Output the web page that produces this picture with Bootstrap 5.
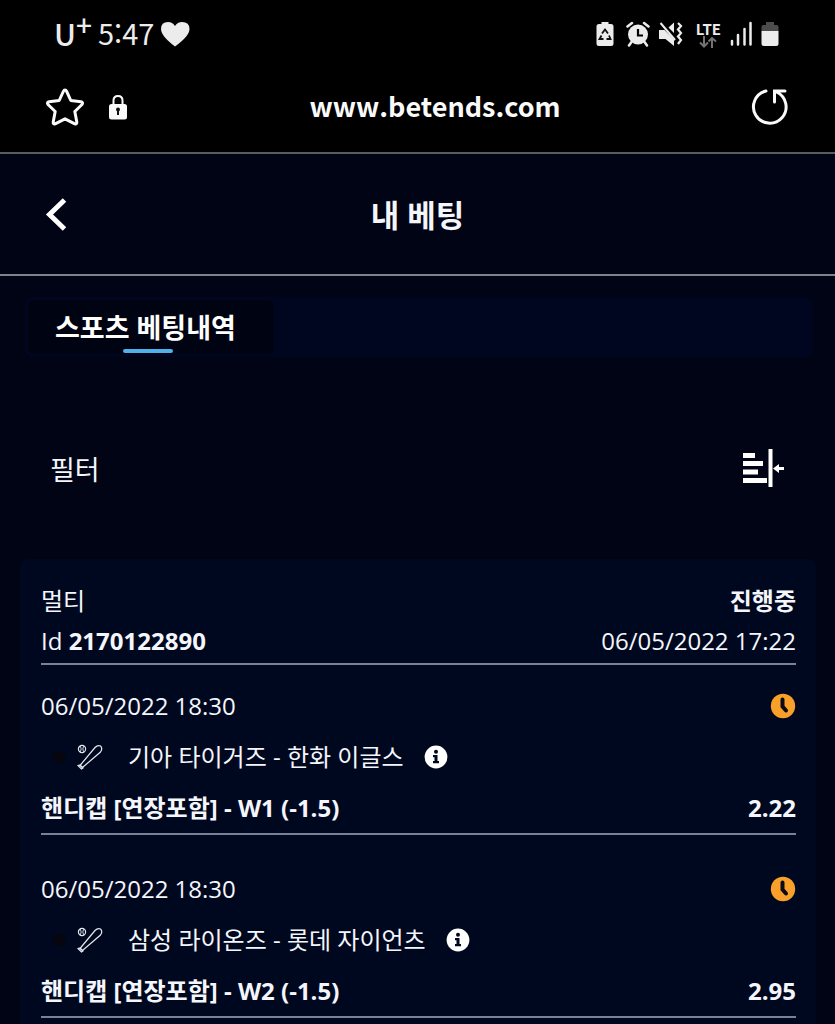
<!DOCTYPE html>
<html lang="ko">
<head>
<meta charset="utf-8">
<meta name="viewport" content="width=device-width, initial-scale=1">
<title>내 베팅</title>
<link rel="stylesheet" href="https://cdn.jsdelivr.net/npm/bootstrap@5.3.0/dist/css/bootstrap.min.css">
<style>
  body { background: #000415; color: #f4f6fb; font-family: "Open Sans", "Noto Sans CJK KR", sans-serif; font-size: 24px; line-height: 40px; }
  svg { display: block; flex: none; }
  .browser-chrome { background: #000; border-bottom: 2px solid #5c5c5c; font-family: "Noto Sans CJK KR", "Noto Sans", sans-serif; }
  .status-bar { height: 68px; padding: 0 56px 0 54px; color: #ececec; }
  .status-left { padding-bottom: 4px; gap: 6px; }
  .carrier { font-size: 30px; font-weight: 500; padding-top: 2px; }
  .carrier sup { font-size: 28px; top: -10px; line-height: 0; }
  .clock-text { font-size: 29px; font-weight: 400; }
  .net-type { font-size: 15px; font-weight: 700; line-height: 15px; }
  .address-bar { height: 84px; padding: 0 45px 6px; }
  .address-bar a { color: #fafafa; font-size: 27px; font-weight: 600; padding: 0 0 2px 35px; }
  .side { flex: 1 0 0; }
  .page-header { height: 122px; border-bottom: 2px solid #81838c; padding: 0 45px; }
  .page-header h1 { font-size: 31px; font-weight: 700; padding-top: 4px; }
  .tab-strip { margin: 21px 22px 0 25px; background: #00061f; border-radius: 8px; padding: 3px; }
  .tab-strip .nav-link { position: relative; background: #000311; color: #fff; font-size: 27px; font-weight: 700; line-height: 52px; padding: 2px 38px 0 27px; border-radius: 6px; }
  .tab-strip .nav-link::after { content: ""; position: absolute; left: 50%; bottom: 1px; width: 50px; height: 4px; margin-left: -28px; border-radius: 2px; background: #4fb0ea; }
  .filter-row { margin: 79px 50px 60px; height: 63px; font-size: 27px; }
  .filter-row span { padding-top: 4px; }
  .bet-card { margin: 0 19px 0 20px; padding: 22px 20px 0 21px; background: #000820; border-radius: 8px 8px 0 0; }
  .bet-head { border-bottom: 2px solid #7c8097; padding-bottom: 2px; }
  .entry { border-bottom: 2px solid #7c8097; padding-top: 28px; line-height: 51px; }
  .bet-head + .entry { padding-top: 15px; }
  .teams { padding-left: 12px; }
  .flag-dot { width: 12px; height: 12px; background: #05060f; border-radius: 4px; }
  .sport-icon { margin: 0 25px 0 12px; }
  .match { margin-right: 20px; }
</style>
</head>
<body class="min-vh-100 d-flex flex-column">
<svg width="0" height="0" class="position-absolute" aria-hidden="true">
  <symbol id="bat" viewBox="0 0 26 26">
    <g fill="none" stroke="#e6e8ef" stroke-width="1.2">
      <circle cx="5" cy="5" r="3.6"/><path d="M3.400 2.200Q5 5 3.400 7.800M6.600 2.200Q5 5 6.600 7.800" stroke-width=".9"/>
      <path d="M3 21.500L18 3.500Q20.500 1 23.500 2Q26 4.500 23.500 8L5.500 23.500Z"/>
      <path d="M1 21.500Q2.500 20.500 4 22T6 24L4.500 25Z"/>
    </g>
  </symbol>
  <symbol id="info" viewBox="0 0 24 24">
    <circle cx="12" cy="12" r="11.400" fill="#fff"/><circle cx="12" cy="6.800" r="2" fill="#000820"/>
    <path d="M9 10h4.500v6H15v2.200H9V16h1.500v-3.800H9z" fill="#000820"/>
  </symbol>
  <symbol id="pending" viewBox="0 0 26 26">
    <circle cx="13" cy="13" r="12.200" fill="#f9a02a"/>
    <path d="M12.500 6.500v7l3.500 4" fill="none" stroke="#0b0a16" stroke-width="4" stroke-linecap="round"/>
  </symbol>
</svg>

<header class="browser-chrome">
  <div class="status-bar d-flex align-items-center justify-content-between">
    <div class="status-left d-flex align-items-center">
      <span class="carrier">U<sup>+</sup></span>
      <span class="clock-text">5:47</span>
      <svg class="mt-1" width="30" height="28" viewBox="0 0 30 28" fill="#ececec"><path d="M15 26.500Q1 16 1 9Q1 2 8 2Q12.500 2 15 6Q17.500 2 22 2Q29.500 2 29.500 9Q29.500 16 15 26.500Z"/></svg>
    </div>
    <div class="d-flex align-items-center">
      <svg width="18" height="26" viewBox="0 0 18 26"><path d="M5.500 1h7v2H15q2.500 0 2.500 2.500v17q0 2.500-2.500 2.500H3q-2.500 0-2.500-2.500v-17Q.5 3 3 3h2.500z" fill="#ececec"/><path d="M6 12.500L9 8.500L12 12.500M13 14.500L14.500 18H10.500M7.500 18H3.500L5.500 14.500" fill="none" stroke="#111" stroke-width="1.800"/></svg>
      <svg class="ms-2 me-2 ps-1" width="28" height="26" viewBox="0 0 24 26"><circle cx="12" cy="13.500" r="10" fill="#ececec"/><path d="M1.500 5.500L6 2M22.500 5.500L18 2M5.500 21L3 24.500M18.500 21L21 24.500" stroke="#ececec" stroke-width="2.500" stroke-linecap="round"/><path d="M12 8v6.500h5" fill="none" stroke="#000" stroke-width="2.200"/></svg>
      <svg width="26" height="26" viewBox="0 0 26 26"><path d="M1 9h5.500L16 18.500V25L7.500 18H1zM10.500 6.500L16 1.500V12z" fill="#ececec"/><path d="M2.500 2L17 19" stroke="#ececec" stroke-width="2"/><path d="M20 2l3 3-3 3.500 3 3.500-3 3.500 3 3.500-3 4" fill="none" stroke="#ececec" stroke-width="2.200"/></svg>
      <div class="ms-2 ps-1 d-flex flex-column align-items-center">
        <span class="net-type">LTE</span>
        <svg width="18" height="12" viewBox="0 0 18 12" fill="none" stroke="#737373" stroke-width="2"><path d="M5 0v10M1 6.500l4 4 4-4M13 12V2M9.500 5.500L13 2l4 3.500"/></svg>
      </div>
      <svg class="ms-2" width="24" height="26" viewBox="0 0 24 26" stroke="#ececec" stroke-width="2.500" stroke-linecap="round"><path d="M3 20v3.500M9 14v9.500M15.500 8v15.500M21.500 2v21.500"/></svg>
      <svg class="ms-2" width="18" height="26" viewBox="0 0 18 26"><path d="M5 1h8v3h2.500q2 0 2 2v4H.5V6q0-2 2-2H5z" fill="#4c4c4c"/><path d="M.5 10h17v12.500q0 2.500-2.500 2.500H3q-2.500 0-2.500-2.500z" fill="#ececec"/></svg>
    </div>
  </div>
  <div class="address-bar d-flex align-items-center">
    <div class="side d-flex align-items-center gap-4">
      <button class="btn p-0 border-0" aria-label="북마크"><svg width="40" height="40" viewBox="0 0 40 40" fill="none" stroke="#fafafa" stroke-width="3" stroke-linejoin="round"><path d="M20 3Q21 3 21.700 4.500L25.800 13.500L36 14.800Q38.500 15.500 37 17.500L29.800 24.500L31.800 35Q32 37.500 29.800 36.800L20 31.800L10.200 36.800Q8 37.500 8.200 35L10.200 24.500L3 17.500Q1.500 15.500 4 14.800L14.200 13.500L18.300 4.500Q19 3 20 3Z"/></svg></button>
      <svg width="18" height="26" viewBox="0 0 18 26"><path d="M4.500 13V6.500Q4.500 2 9 2t4.500 4.500V13" fill="none" stroke="#fafafa" stroke-width="2"/><rect y="10" width="18" height="15.500" rx="2.500" fill="#fafafa"/><circle cx="9" cy="15.500" r="2" fill="#111"/><path d="M9 16v5" stroke="#111" stroke-width="2"/></svg>
    </div>
    <a href="#" class="text-decoration-none">www.betends.com</a>
    <div class="side d-flex justify-content-end">
      <button class="btn p-0 border-0" aria-label="새로고침"><svg width="40" height="40" viewBox="0 0 40 40" fill="none" stroke="#fafafa" stroke-width="3" stroke-linecap="round"><path d="M16 4A16.300 16.300 0 1 0 26.500 5M24.500 15V4h10.500"/></svg></button>
    </div>
  </div>
</header>

<div class="page-header d-flex align-items-center">
  <div class="side"><button class="btn p-0 border-0" aria-label="뒤로"><svg width="22" height="36" viewBox="0 0 22 36" fill="none" stroke="#fff" stroke-width="5"><path d="M19.500 2L4.500 16.500L19.500 31"/></svg></button></div>
  <h1 class="m-0">내 베팅</h1>
  <div class="side"></div>
</div>

<nav class="tab-strip d-flex"><a class="nav-link" href="#" aria-current="page">스포츠 베팅내역</a></nav>

<div class="filter-row d-flex align-items-center justify-content-between">
  <span>필터</span>
  <button class="btn p-0 border-0" aria-label="필터 열기"><svg width="42" height="38" viewBox="0 0 42 38" fill="#fff"><path d="M0 4h12v5H0zM0 12h20v5H0zM0 20.500h15v5H0zM0 29h24v5H0zM25.500 0h4v38h-4zM30 19.500L36 15v3h5v3h-5v3z"/></svg></button>
</div>

<main class="bet-card flex-grow-1">
  <div class="bet-head">
    <div class="d-flex justify-content-between"><span>멀티</span><strong>진행중</strong></div>
    <div class="d-flex justify-content-between"><span>Id <strong>2170122890</strong></span><time>06/05/2022 17:22</time></div>
  </div>
  <section class="entry">
    <div class="d-flex justify-content-between align-items-center"><time>06/05/2022 18:30</time><svg width="26" height="26"><use href="#pending"/></svg></div>
    <div class="teams d-flex align-items-center"><span class="flag-dot"></span><svg class="sport-icon" width="26" height="26"><use href="#bat"/></svg><span class="match">기아 타이거즈 - 한화 이글스</span><button class="btn p-0 border-0" aria-label="정보"><svg width="24" height="24"><use href="#info"/></svg></button></div>
    <div class="d-flex justify-content-between fw-bold"><span>핸디캡 [연장포함] - W1 (-1.5)</span><span>2.22</span></div>
  </section>
  <section class="entry">
    <div class="d-flex justify-content-between align-items-center"><time>06/05/2022 18:30</time><svg width="26" height="26"><use href="#pending"/></svg></div>
    <div class="teams d-flex align-items-center"><span class="flag-dot"></span><svg class="sport-icon" width="26" height="26"><use href="#bat"/></svg><span class="match">삼성 라이온즈 - 롯데 자이언츠</span><button class="btn p-0 border-0" aria-label="정보"><svg width="24" height="24"><use href="#info"/></svg></button></div>
    <div class="d-flex justify-content-between fw-bold"><span>핸디캡 [연장포함] - W2 (-1.5)</span><span>2.95</span></div>
  </section>
</main>
<script src="https://cdn.jsdelivr.net/npm/bootstrap@5.3.0/dist/js/bootstrap.bundle.min.js"></script>
</body>
</html>
